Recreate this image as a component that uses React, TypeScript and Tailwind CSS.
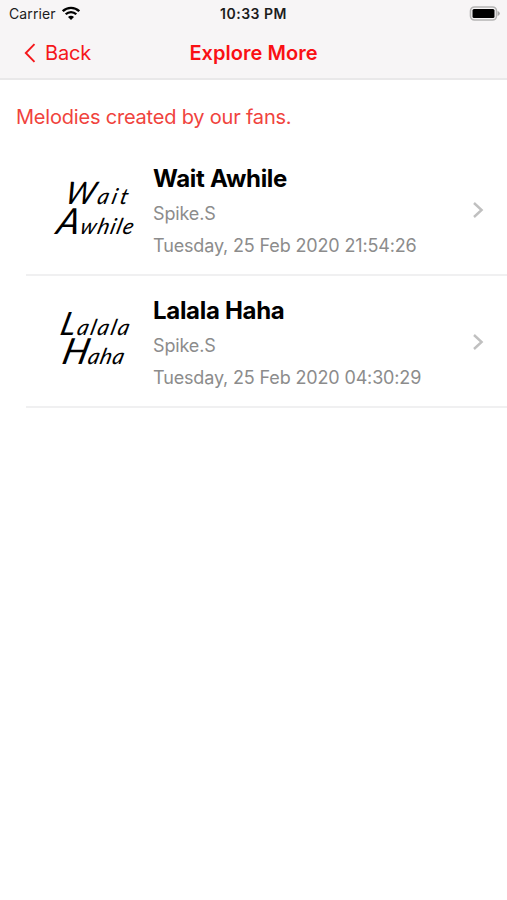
import { ReactNode } from "react";

interface Melody {
  id: number;
  title: string;
  author: string;
  date: string;
  cover: ReactNode;
}

const script = {
  fontFamily: "Lato, sans-serif",
  fontStyle: "italic",
  fontWeight: 400,
};

const melodies: Melody[] = [
  {
    id: 1,
    title: "Wait Awhile",
    author: "Spike.S",
    date: "Tuesday, 25 Feb 2020 21:54:26",
    cover: (
      <svg width="110" height="90" viewBox="0 0 110 90" style={script}>
        <g transform="skewX(-14)">
          <text x="33" y="38" fontSize="22" textLength="63" lengthAdjust="spacing">
            <tspan fontSize="31">W</tspan>ait
          </text>
          <text x="32" y="68" fontSize="22" textLength="77" lengthAdjust="spacing">
            <tspan fontSize="36">A</tspan>while
          </text>
        </g>
      </svg>
    ),
  },
  {
    id: 2,
    title: "Lalala Haha",
    author: "Spike.S",
    date: "Tuesday, 25 Feb 2020 04:30:29",
    cover: (
      <svg width="110" height="90" viewBox="0 0 110 90" style={script}>
        <g transform="skewX(-14)">
          <text x="28" y="37" fontSize="22" textLength="69" lengthAdjust="spacing">
            <tspan fontSize="32">L</tspan>alala
          </text>
          <text x="37" y="66" fontSize="22" textLength="62" lengthAdjust="spacing">
            <tspan fontSize="36">H</tspan>aha
          </text>
        </g>
      </svg>
    ),
  },
];

function StatusBar() {
  return (
    <div className="flex h-7 items-center justify-between pl-[9px] pr-[7px] text-[#1c1c1c]">
      <div className="flex w-40 items-center gap-[6px]">
        <span className="-mt-px text-[14px] tracking-[0.1px]">Carrier</span>
        <svg className="-mt-[2px]" width="18" height="14" viewBox="0 0 18 14" fill="none" stroke="#000" strokeWidth="2.3">
          <path d="M0.8 5.2a11.6 11.6 0 0 1 16.4 0" />
          <path d="M3.7 8.3a7.5 7.5 0 0 1 10.6 0" />
          <path d="M9 14 6 10.9a4.2 4.2 0 0 1 6 0Z" fill="#000" stroke="none" />
        </svg>
      </div>
      <span className="-mt-px -ml-[2px] text-[14px] font-semibold tracking-[0.5px]">10:33 PM</span>
      <div className="flex w-40 justify-end">
        <svg className="-mt-[2px]" width="31" height="15" viewBox="0 0 31 15">
          <rect x="1.5" y="1" width="26" height="13" rx="4" fill="#f7f5f6" stroke="#b5b4b4" strokeWidth="1.6" />
          <rect x="3.5" y="3" width="22" height="9" rx="1.5" fill="#000" />
          <path d="M28.6 5v5q2.2-.8 2.2-2.5T28.6 5Z" fill="#a5a4a4" />
        </svg>
      </div>
    </div>
  );
}

function NavBar() {
  return (
    <div className="grid h-[50px] grid-cols-3 items-center text-[20px] text-[#f5171b]">
      <button className="flex items-center gap-[9px] pl-[24px] tracking-[-0.15px]">
        <svg width="12" height="20" viewBox="0 0 12 20" fill="none" stroke="currentColor" strokeWidth="1.9">
          <path d="M10.5 1.2 1.8 10l8.7 8.8" />
        </svg>
        Back
      </button>
      <h1 className="text-center font-semibold tracking-[0.04px] whitespace-nowrap text-[#fa1014]">Explore More</h1>
    </div>
  );
}

function MelodyRow({ melody }: { melody: Melody }) {
  return (
    <li className="ml-[26px] flex h-[132px] border-b-2 border-[#f0f0f1]">
      <div className="ml-[14px] mt-[22px] w-[113px]">{melody.cover}</div>
      <div className="flex-1 pt-[19px] whitespace-nowrap">
        <h2 className="text-[24px] leading-8 font-bold tracking-[-0.3px] text-black">{melody.title}</h2>
        <p className="mt-[3px] text-[18px] leading-8 tracking-[-0.15px] text-[#8c8c8c]">{melody.author}</p>
        <p className="text-[18px] leading-8 tracking-[-0.15px] text-[#8c8c8c]">{melody.date}</p>
      </div>
      <svg className="mt-[58px] mr-[23px]" width="12" height="16" viewBox="0 0 12 16" fill="none" stroke="#c0c0c0" strokeWidth="2.4">
        <path d="m2 1 7.6 7L2 15" />
      </svg>
    </li>
  );
}

export default function App() {
  return (
    <div className="h-[900px] w-[507px] overflow-hidden bg-white font-[Inter,sans-serif]">
      <header className="h-20 border-b-2 border-[#e9e8e9] bg-[#f7f5f6]">
        <StatusBar />
        <NavBar />
      </header>
      <p className="h-[64px] pt-[21px] pl-4 text-[20px] leading-8 tracking-[-0.2px] text-[#f0433d]">
        Melodies created by our fans.
      </p>
      <ul>
        {melodies.map((melody) => (
          <MelodyRow key={melody.id} melody={melody} />
        ))}
      </ul>
    </div>
  );
}
